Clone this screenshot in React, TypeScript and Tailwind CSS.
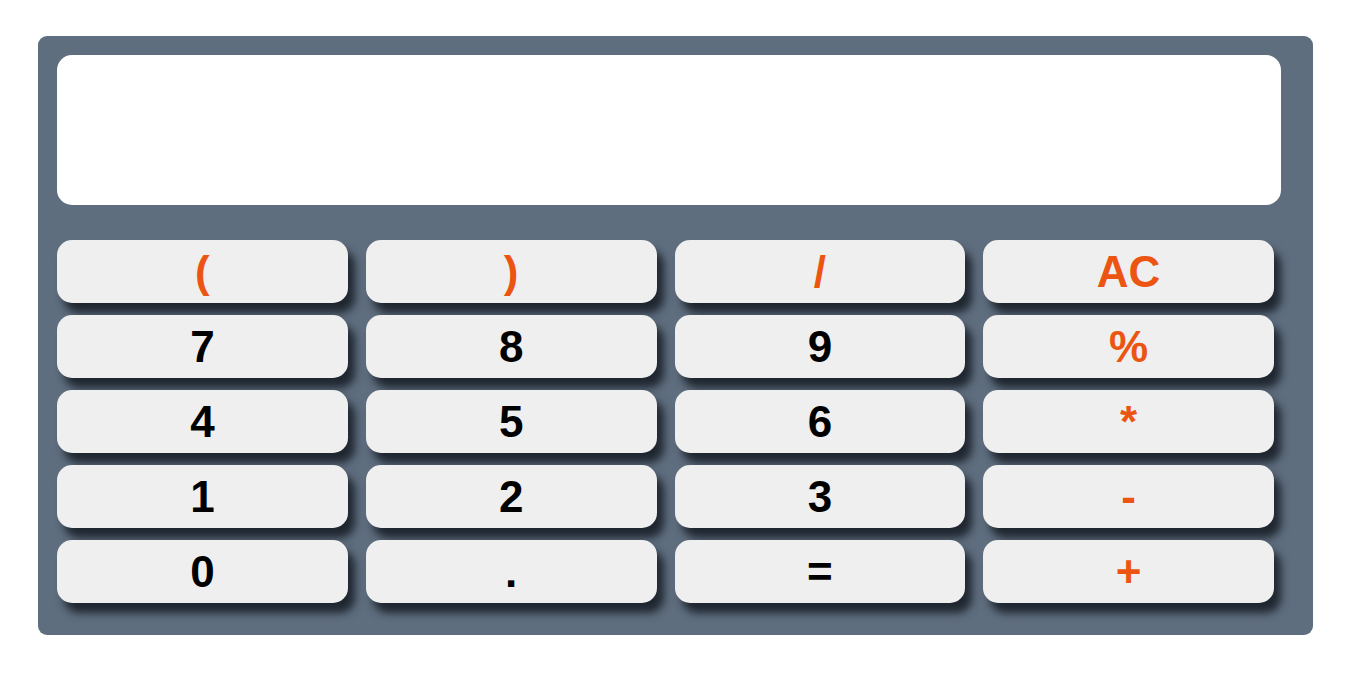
const keys: { label: string; op?: boolean }[] = [
  { label: "(", op: true },
  { label: ")", op: true },
  { label: "/", op: true },
  { label: "AC", op: true },
  { label: "7" },
  { label: "8" },
  { label: "9" },
  { label: "%", op: true },
  { label: "4" },
  { label: "5" },
  { label: "6" },
  { label: "*", op: true },
  { label: "1" },
  { label: "2" },
  { label: "3" },
  { label: "-", op: true },
  { label: "0" },
  { label: "." },
  { label: "=" },
  { label: "+", op: true },
];

function App() {
  return (
    <div className="min-h-screen bg-white pt-[36px] font-['Liberation_Sans',Arial,sans-serif]">
      <div className="ml-[38px] w-[1275px] rounded-[9px] bg-[#5f6e7f] pl-[19px] pt-[19px] pb-[32px]">
        <div className="h-[150px] w-[1224px] rounded-[15px] bg-white" />
        <div className="mt-[35px] grid w-[1217px] grid-cols-4 gap-x-[18px] gap-y-[12px]">
          {keys.map((k) => (
            <button
              key={k.label}
              className={`flex h-[63px] items-center justify-center rounded-[15px] bg-[#efefef] text-[44px] font-bold leading-none shadow-[7px_10px_9px_rgba(20,26,34,0.85)] ${
                k.op ? "text-[#ec5412]" : "text-black"
              }`}
            >
              {k.label}
            </button>
          ))}
        </div>
      </div>
    </div>
  );
}

export default App;
